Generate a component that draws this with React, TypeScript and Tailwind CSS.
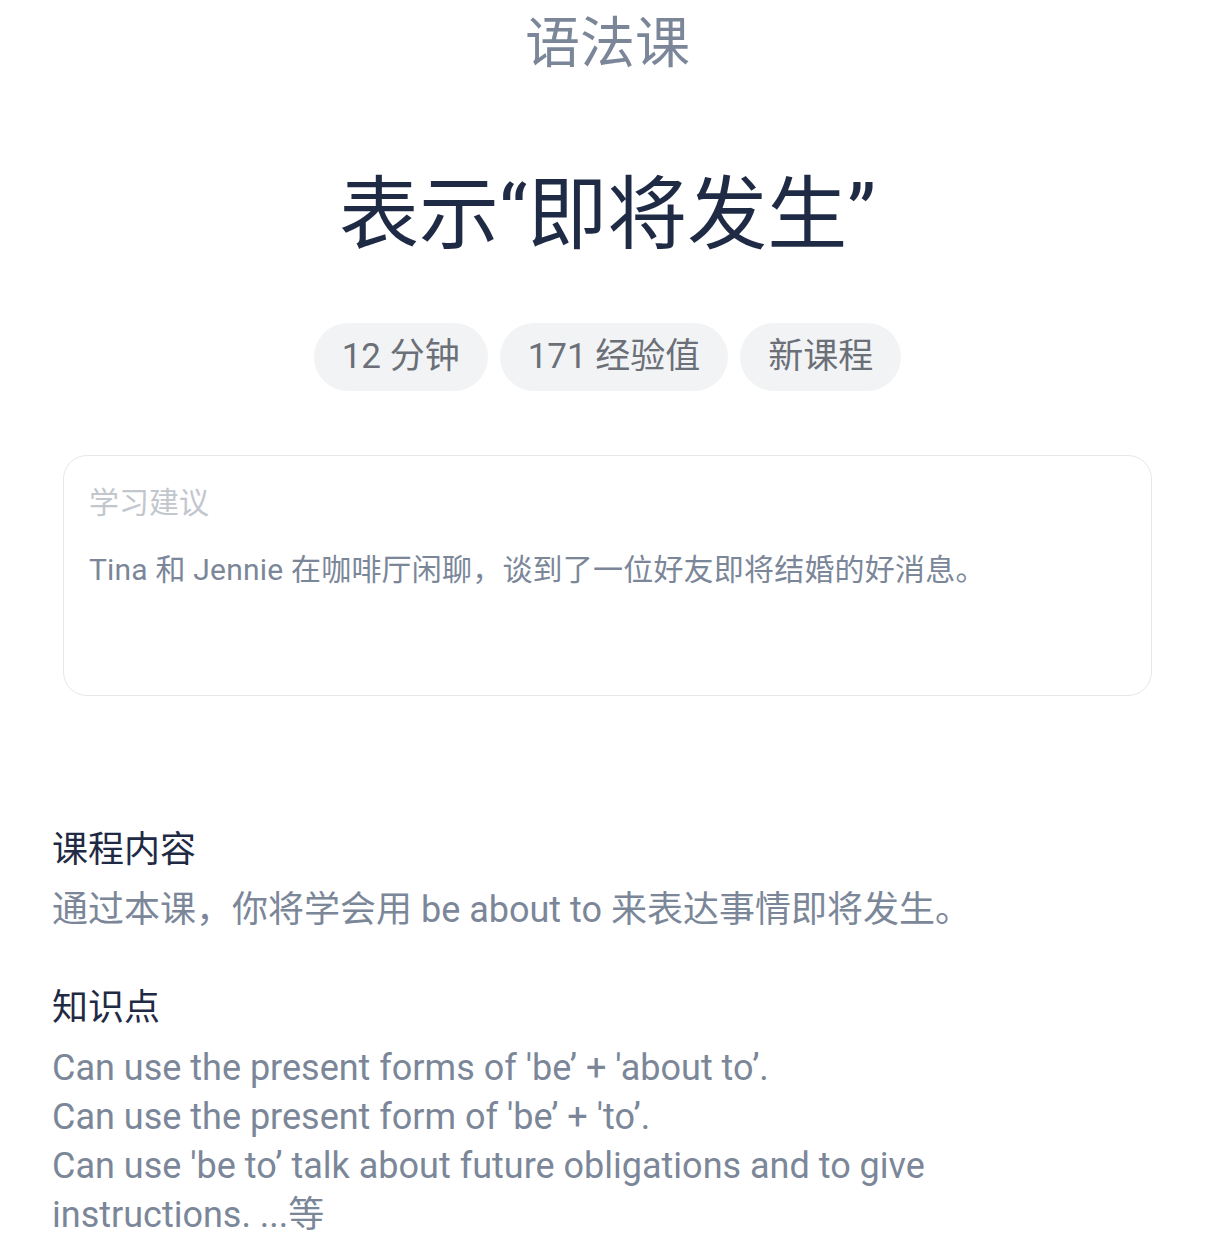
import React from 'react';

const font = { fontFamily: 'Roboto, "Noto Sans CJK SC", sans-serif' };

const tags = ['12 分钟', '171 经验值', '新课程'];

const points = [
  "Can use the present forms of 'be’ + 'about to’.",
  "Can use the present form of 'be’ + 'to’.",
  "Can use 'be to’ talk about future obligations and to give instructions. ...等",
];

export default function App() {
  return (
    <div className="min-h-screen bg-white" style={font}>
      <div className="flex flex-col items-center">
        <div className="pt-[9px] text-[55px] leading-[68px] text-[#7b8799]">语法课</div>
        <h1 className="mt-[90px] text-[80px] leading-[96px] font-normal text-[#1f2a44]">表示“即将发生”</h1>
        <div className="mt-[60px] flex gap-[12px]">
          {tags.map((t) => (
            <span
              key={t}
              className="h-[68px] px-[28px] flex items-center rounded-full bg-[#f2f3f5] text-[35px] text-[#6b6f77]"
            >
              {t}
            </span>
          ))}
        </div>
      </div>

      <div className="mx-[63px] mt-[64px] h-[241px] rounded-[24px] border border-[#e5e7eb] px-[25px] pt-[27px]">
        <div className="text-[30px] leading-[40px] text-[#c2c6cd]">学习建议</div>
        <p className="mt-[27px] text-[30px] leading-[40px] tracking-[0.2px] text-[#7b8799]">
          Tina 和 Jennie 在咖啡厅闲聊，谈到了一位好友即将结婚的好消息。
        </p>
      </div>

      <div className="px-[52px] pt-[130px] pb-[20px]">
        <section>
          <h3 className="text-[36px] leading-[48px] text-[#1f2a44]">课程内容</h3>
          <p className="mt-[12px] text-[36px] leading-[48px] text-[#7b8799]">
            通过本课，你将学会用 be about to 来表达事情即将发生。
          </p>
        </section>
        <section className="mt-[50px]">
          <h3 className="text-[36px] leading-[48px] text-[#1f2a44]">知识点</h3>
          <div className="mt-[12px] max-w-[900px] text-[36px] leading-[49px] text-[#7b8799]">
            {points.map((p) => (
              <div key={p}>{p}</div>
            ))}
          </div>
        </section>
      </div>
    </div>
  );
}
